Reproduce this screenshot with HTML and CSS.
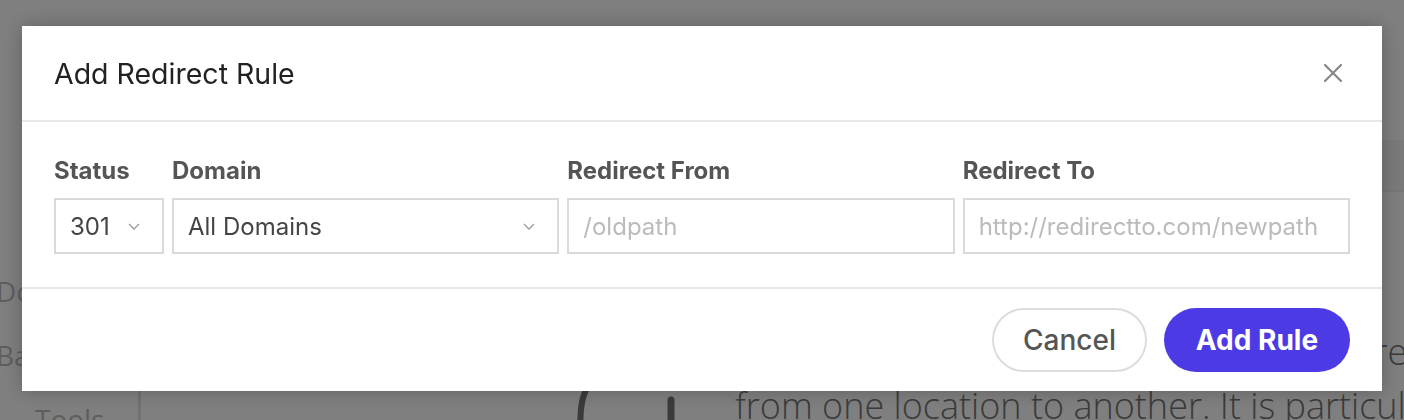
FILE: index.html
```html
<html>
<head>
  <link rel="stylesheet" href="styles.css">
</head>
<body>
  <div class="page">
    <div class="topbar"></div>
    <div class="content">
      <div class="sidebar">
        <div class="side-item side-top">Domains</div>
        <div class="side-item">Backups</div>
        <div class="side-item side-sub">Tools</div>
      </div>
      <div class="main">
        <div class="main-bar"></div>
        <div class="main-body">
          <svg class="art" width="120" height="60" viewBox="0 0 120 60">
            <path d="M20 2 C 10 10, 8 30, 10 60" fill="none" stroke="#767676" stroke-width="6" stroke-linecap="round"/>
            <path d="M100 18 L 100 60" fill="none" stroke="#767676" stroke-width="7" stroke-linecap="round"/>
          </svg>
          <p class="intro">A redirect simply sends visitors elsewhere when a page moves<br>from one location to another. It is particularly useful when a page has moved.</p>
        </div>
      </div>
    </div>
  </div>

  <div class="overlay"></div>

  <div class="modal">
    <div class="modal-header">
      <h2 class="modal-title">Add Redirect Rule</h2>
      <svg class="close" width="18" height="18" viewBox="0 0 18 18">
        <path d="M1 1 L17 17 M17 1 L1 17" stroke="#878787" stroke-width="2.2" stroke-linecap="round"/>
      </svg>
    </div>

    <div class="modal-body">
      <div class="field">
        <label>Status</label>
        <div class="select">
          <span>301</span>
          <svg width="12" height="7" viewBox="0 0 12 7"><path d="M1 1 L6 6 L11 1" fill="none" stroke="#9a9a9a" stroke-width="1.3"/></svg>
        </div>
      </div>
      <div class="field">
        <label>Domain</label>
        <div class="select">
          <span>All Domains</span>
          <svg width="12" height="7" viewBox="0 0 12 7"><path d="M1 1 L6 6 L11 1" fill="none" stroke="#9a9a9a" stroke-width="1.3"/></svg>
        </div>
      </div>
      <div class="field">
        <label>Redirect From</label>
        <input type="text" class="text-input" placeholder="/oldpath">
      </div>
      <div class="field">
        <label>Redirect To</label>
        <input type="text" class="text-input" placeholder="http://redirectto.com/newpath">
      </div>
    </div>

    <div class="modal-footer">
      <button class="btn btn-cancel">Cancel</button>
      <button class="btn btn-primary">Add Rule</button>
    </div>
  </div>
</body>
</html>
```

FILE: styles.css
```css
/* page behind the dialog */
body {
  margin: 0;
  overflow: hidden;
  background: #fff;
  font-family: "Open Sans", "Liberation Sans", sans-serif;
}

.page {
  height: 420px;
}

.topbar {
  height: 140px;
}

.content {
  display: flex;
  height: 280px;
}

.sidebar {
  width: 138px;
  border-right: 3px solid #e2e2e2;
  padding-top: 132px;
  flex-shrink: 0;
}

.side-item {
  font-size: 28px;
  color: #bdbdbd;
  height: 64px;
  margin-left: -4px;
  white-space: nowrap;
  overflow: hidden;
}

.side-sub {
  margin-left: 35px;
}

.main {
  flex: 1;
  min-width: 0;
}

.main-bar {
  height: 50px;
  background: #f4f4f4;
  border-bottom: 2px solid #ececec;
}

.main-body {
  display: flex;
  padding-left: 430px;
  padding-top: 133px;
}

.art {
  margin-top: 57px;
  flex-shrink: 0;
}

.intro {
  margin: 0 0 0 44px;
  font-size: 36px;
  font-weight: 300;
  line-height: 54px;
  color: #767676;
  white-space: nowrap;
}

/* dim layer */
.overlay {
  position: fixed;
  top: 0;
  left: 0;
  right: 0;
  bottom: 0;
  background: rgba(0, 0, 0, 0.5);
}

/* dialog */
.modal {
  position: fixed;
  left: 22px;
  top: 26px;
  width: 1360px;
  background: #fff;
  box-shadow: 0 0 18px rgba(0, 0, 0, 0.25);
  font-family: Inter, "Noto Sans", sans-serif;
}

.modal-header {
  height: 94px;
  padding: 0 40px 0 32px;
  display: flex;
  align-items: center;
  justify-content: space-between;
  border-bottom: 2px solid #e8e8e8;
}

.modal-title {
  margin: 0;
  font-size: 28.5px;
  font-weight: 400;
  color: #222;
}

.modal-body {
  display: grid;
  grid-template-columns: 110px 1fr 1fr 1fr;
  gap: 8px;
  padding: 35px 32px 33px;
  border-bottom: 2px solid #e8e8e8;
}

.field label {
  display: block;
  font-size: 24px;
  font-weight: 700;
  color: #555;
  line-height: 28px;
  margin-bottom: 13px;
}

.select, .text-input {
  box-sizing: border-box;
  width: 100%;
  height: 56px;
  border: 2px solid #dadada;
  font-family: Inter, "Noto Sans", sans-serif;
  font-size: 24px;
  color: #444;
}

.select {
  display: flex;
  align-items: center;
  justify-content: space-between;
  padding: 0 22px 0 14px;
}

.text-input {
  padding: 0 14px;
  outline: none;
}

.text-input::placeholder {
  color: #bbb;
}

.modal-footer {
  display: flex;
  justify-content: flex-end;
  gap: 17px;
  padding: 19px 32px;
}

.btn {
  height: 64px;
  border-radius: 32px;
  font-family: Inter, "Noto Sans", sans-serif;
  font-size: 28px;
  cursor: pointer;
}

.btn-cancel {
  width: 155px;
  background: #fff;
  border: 2px solid #dcdcdc;
  color: #555;
  font-weight: 500;
}

.btn-primary {
  width: 186px;
  background: #4c3be4;
  border: none;
  color: #fff;
  font-weight: 700;
}
```
